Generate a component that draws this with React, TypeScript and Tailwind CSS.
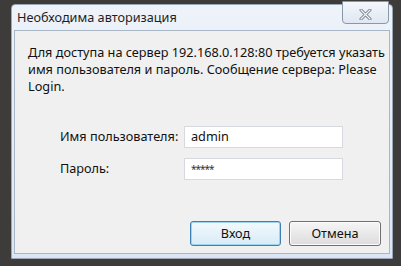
import React from 'react';

const font = { fontFamily: '"Noto Sans", "Open Sans", sans-serif' };

export default function App() {
  return (
    <div className="w-[401px] h-[266px] overflow-hidden bg-[#3d3c3a] pt-[4px] pl-[11px]" style={font}>
      <div className="w-[382px] h-[255px] flex flex-col bg-gradient-to-b from-[#eef3fa] to-[#dce6f3] border border-[#9aa7b6] rounded-t-[4px]">
        {/* Title bar */}
        <div className="relative h-[25px] shrink-0 flex items-center pl-[5px]">
          <span className="text-[12.7px] text-[#1e1e1e] leading-none">Необходима авторизация</span>
          <div className="absolute right-[3px] -top-[4px] w-[47px] h-[23px] rounded-b-[4px] border border-[#8b97a7] bg-gradient-to-b from-[#f4f7fb] to-[#dfe7f2] flex items-center justify-center pt-[3px]">
            <svg width="13" height="11" viewBox="0 0 13 11">
              <path d="M2 1 L11 10 M11 1 L2 10" stroke="#6f7a86" strokeWidth="3" strokeLinecap="round" />
              <path d="M2 1 L11 10 M11 1 L2 10" stroke="#f2f4f7" strokeWidth="1.3" strokeLinecap="round" />
            </svg>
          </div>
        </div>
        {/* Client area */}
        <div className="flex-1 mx-[2px] mb-[4px] border border-[#a9b6c6] bg-[#f0f0f0] flex flex-col">
          <p className="pl-[13px] pt-[13px] text-[12.7px] leading-[17px] text-[#111] whitespace-nowrap">
            Для доступа на сервер 192.168.0.128:80 требуется указать<br />
            имя пользователя и пароль. Сообщение сервера: Please<br />
            Login.
          </p>
          <div className="mt-[31px] pl-[45px] flex flex-col gap-[10px]">
            <div className="flex items-center">
              <span className="w-[124px] text-[12.7px] text-[#111]">Имя пользователя:</span>
              <div className="w-[159px] h-[22px] bg-white border border-[#d6d9de] flex items-center px-[6px] text-[12.7px] text-[#111]">admin</div>
            </div>
            <div className="flex items-center">
              <span className="w-[124px] text-[12.7px] text-[#111]">Пароль:</span>
              <div className="w-[159px] h-[22px] bg-white border border-[#d6d9de] flex items-center px-[6px] text-[10px] tracking-[-1px] text-[#333]">*****</div>
            </div>
          </div>
          <div className="mt-auto mb-[7px] mr-[8px] flex justify-end gap-[8px]">
            <button className="w-[91px] h-[25px] rounded-[3px] border border-[#3c7fb1] bg-gradient-to-b from-[#f2f9fd] to-[#d8ebf6] text-[12.7px] text-[#111] shadow-[inset_0_0_0_1px_#9fd3f0]">Вход</button>
            <button className="w-[92px] h-[25px] rounded-[3px] border border-[#707070] bg-gradient-to-b from-[#f6f6f6] to-[#dcdcdc] text-[12.7px] text-[#111] shadow-[inset_0_0_0_1px_#fcfcfc]">Отмена</button>
          </div>
        </div>
      </div>
    </div>
  );
}
